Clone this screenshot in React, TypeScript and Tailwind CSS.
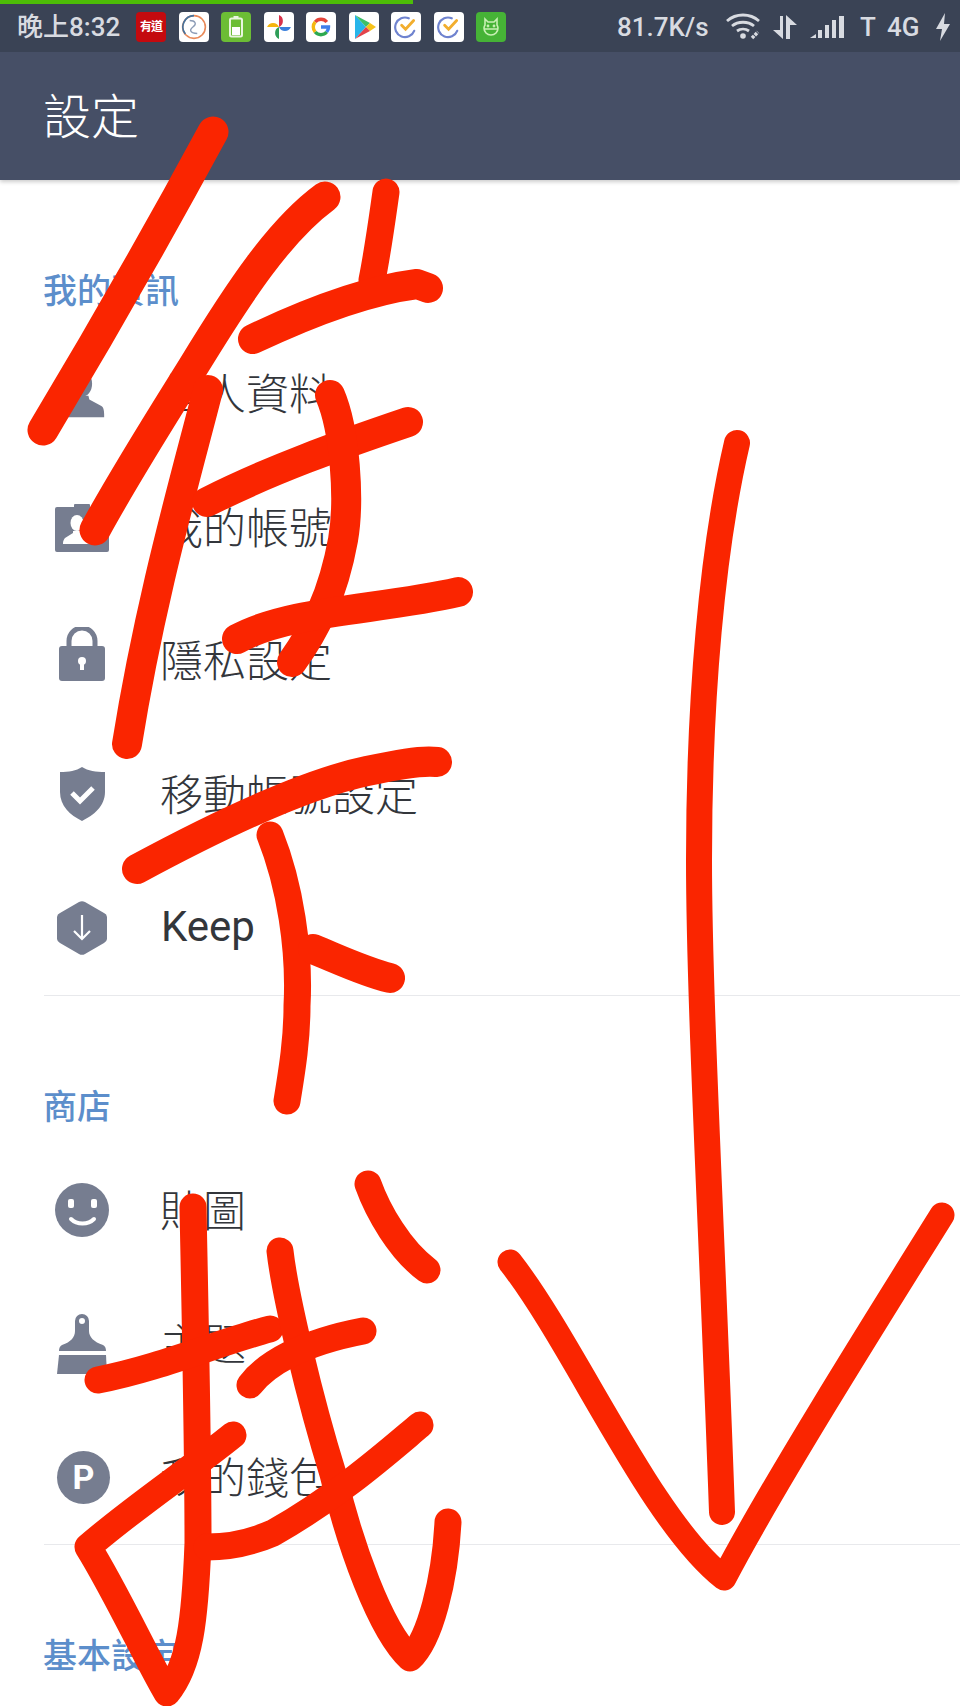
import type { ReactNode } from "react";

const gray = "#767d90";

function AppTile({ bg = "bg-white", children }: { bg?: string; children: ReactNode }) {
  return <div className={`flex h-[30px] w-[30px] items-center justify-center overflow-hidden rounded-[4px] ${bg}`}>{children}</div>;
}

function TickTick() {
  return (
    <svg width="24" height="24" viewBox="0 0 22 22" fill="none">
      <path d="M18.500 14.500A9 9 0 1 1 13.500 3" stroke="#6f83cf" strokeWidth="2" strokeLinecap="round" />
      <path d="M7 9.500l3.600 3.600L18 5" stroke="#f2ae2e" strokeWidth="2.600" strokeLinecap="round" />
    </svg>
  );
}

function StatusBar() {
  return (
    <div className="relative flex h-[52px] items-center bg-[#3a4355] pl-[17px] pt-[2px] font-['Roboto','Noto_Sans_CJK_TC',sans-serif] font-medium text-[#d8dbe1]">
      <div className="absolute left-0 top-0 h-1 w-[413px] bg-[#4dbd08]" />
      <span className="w-[119px] text-[26px] leading-none">晚上8:32</span>
      <div className="flex gap-[12.5px]">
        <AppTile bg="bg-[#c40a0e]">
          <span className="text-[12px] font-bold leading-none tracking-[-1px] text-white">有道</span>
        </AppTile>
        <AppTile>
          <svg width="26" height="26" viewBox="0 0 24 24" fill="none">
            <circle cx="12" cy="12" r="10.500" stroke="#e98a5a" strokeWidth="1.500" />
            <path d="M12 1.500a10.500 10.500 0 0 0-8 17" stroke="#44739f" strokeWidth="1.500" />
            <path d="M8 6c5 0 7 3 3 6s-2 6 4 6" stroke="#8c9cb6" strokeWidth="1.300" />
          </svg>
        </AppTile>
        <AppTile bg="bg-[#6cbd35]">
          <svg width="14" height="22" viewBox="0 0 14 22">
            <rect x="4.500" y="0" width="5" height="3" fill="#e9f5df" />
            <rect x="1" y="2.500" width="12" height="18" rx="1.500" fill="none" stroke="#e9f5df" strokeWidth="2" />
            <rect x="3" y="11" width="8" height="8" fill="#fff" />
          </svg>
        </AppTile>
        <AppTile>
          <svg width="26" height="26" viewBox="0 0 24 24">
            <path d="M1 12a6 6 0 0 1 11-0z" fill="#f5b60f" />
            <path d="M12 1a6 6 0 0 1 0 11z" fill="#d8314a" />
            <path d="M23 12a6 6 0 0 1-11 0z" fill="#3a7fdc" />
            <path d="M12 23a6 6 0 0 1 0-11z" fill="#2f9e58" />
          </svg>
        </AppTile>
        <AppTile>
          <svg width="20" height="20" viewBox="0 0 20 20" fill="none" strokeWidth="3.400">
            <path d="M15.800 5A7.500 7.500 0 0 0 4.200 5" stroke="#e5443a" />
            <path d="M4.200 5a7.500 7.500 0 0 0 0 10" stroke="#f4b70f" />
            <path d="M4.200 15a7.500 7.500 0 0 0 11.500 0" stroke="#2da94f" />
            <path d="M15.700 15a7.500 7.500 0 0 0 1.800-5H10" stroke="#3f7fea" />
          </svg>
        </AppTile>
        <AppTile>
          <svg width="24" height="26" viewBox="0 0 24 26">
            <path d="M3 1l11 12L3 25z" fill="#27b5ea" />
            <path d="M3 1l15 8-4 4z" fill="#3fbf68" />
            <path d="M18 9l6 4-6 4-4-4z" fill="#f6c21a" />
            <path d="M3 25l15-8-4-4z" fill="#e2434b" />
          </svg>
        </AppTile>
        <AppTile><TickTick /></AppTile>
        <AppTile><TickTick /></AppTile>
        <AppTile bg="bg-[#46b336]">
          <svg width="22" height="22" viewBox="0 0 22 22" fill="none" stroke="#c8f0b4" strokeWidth="1.600">
            <path d="M5 3l3 3h6l3-3v6a7 6.500 0 0 1 1 3c0 4-3 7-7 7s-7-3-7-7a7 6.500 0 0 1 1-3z" />
            <path d="M4 13h14" />
            <circle cx="8" cy="10" r=".6" />
            <circle cx="14" cy="10" r=".6" />
          </svg>
        </AppTile>
      </div>
      <span className="ml-[111px] w-[109px] text-[26px] leading-none">81.7K/s</span>
      <svg width="36" height="28" viewBox="0 0 36 28" fill="none" stroke="#d8dbe1" strokeWidth="2.800">
        <path d="M1 8c9-8 23-8 32 0" />
        <path d="M6 13c6-5 16-5 22 0" />
        <path d="M11 18c3.500-2.500 8.500-2.500 12 0" />
        <circle cx="17" cy="23" r="2.800" fill="#d8dbe1" stroke="none" />
        <path d="M26 25l6-6" strokeWidth="3.500" strokeDasharray="3 1" />
      </svg>
      <svg className="ml-[11px]" width="24" height="26" viewBox="0 0 24 26" fill="#d8dbe1">
        <path d="M7 2h3v23L0 16h7z" />
        <path d="M13 1l11 10h-7v14h-4z" />
      </svg>
      <svg className="ml-[13px]" width="35" height="24" viewBox="0 0 35 24" fill="#d8dbe1">
        <path d="M0 23l6-4v4z" />
        <rect x="8" y="15" width="4" height="8" />
        <rect x="15" y="10" width="4" height="13" />
        <rect x="22" y="5" width="4" height="18" />
        <rect x="29" y="1" width="5" height="22" />
      </svg>
      <span className="ml-[15px] w-[27px] text-[26px] leading-none">T</span>
      <span className="w-[48px] text-[26px] leading-none">4G</span>
      <svg width="16" height="28" viewBox="0 0 16 28" fill="#d8dbe1">
        <path d="M10 0L1 16h6l-2 12 10-17H9z" />
      </svg>
    </div>
  );
}

function PersonIcon() {
  return (
    <svg className="-ml-[2px]" width="50" height="54" viewBox="0 0 54 54" fill={gray}>
      <ellipse cx="28" cy="16" rx="11" ry="14" />
      <path d="M21 29h14l1 4 13 7c2 1 3 4 3 9v3H6v-3c0-5 1-8 3-9l13-7z" />
    </svg>
  );
}

function CardIcon() {
  return (
    <svg className="mt-[1px]" width="54" height="48" viewBox="0 0 54 48">
      <path d="M2 3h17V1a1 1 0 0 1 1-1h14a1 1 0 0 1 1 1v2h17a2 2 0 0 1 2 2v41a2 2 0 0 1-2 2H2a2 2 0 0 1-2-2V5a2 2 0 0 1 2-2z" fill={gray} />
      <ellipse cx="22" cy="19" rx="6.500" ry="8" fill="#fff" />
      <path d="M18 27h8l1 2 9 5c1 1 2 3 2 5v1H8v-1c0-2 1-4 2-5l8-5z" fill="#fff" />
    </svg>
  );
}

function LockIcon() {
  return (
    <svg className="-mt-[13px]" width="46" height="54" viewBox="0 0 46 54">
      <path d="M10 21v-7a13 13 0 0 1 26 0v7" fill="none" stroke={gray} strokeWidth="5" />
      <rect x="0" y="19" width="46" height="35" rx="3" fill={gray} />
      <circle cx="23" cy="34" r="4" fill="#fff" />
      <rect x="21" y="35" width="4" height="8" fill="#fff" />
    </svg>
  );
}

function ShieldIcon() {
  return (
    <svg width="46" height="54" viewBox="0 0 46 54">
      <path d="M23 0c6 4 14 5 23 5v20c0 14-11 23-23 29C11 48 1 39 1 25V5c9 0 16-1 22-5z" fill={gray} />
      <path d="M13 26l8 8 13-13" fill="none" stroke="#fff" strokeWidth="5" />
    </svg>
  );
}

function HexIcon() {
  return (
    <svg width="50" height="54" viewBox="0 0 50 54">
      <path d="M22 1a6 6 0 0 1 6 0l19 11a5 5 0 0 1 3 5v20a5 5 0 0 1-3 5L28 53a6 6 0 0 1-6 0L3 42a5 5 0 0 1-3-5V17a5 5 0 0 1 3-5z" fill={gray} />
      <path d="M25 14v24M17 30l8 8 8-8" fill="none" stroke="#fff" strokeWidth="2.200" />
    </svg>
  );
}

function SmileIcon() {
  return (
    <svg width="54" height="54" viewBox="0 0 54 54">
      <circle cx="27" cy="27" r="27" fill={gray} />
      <rect x="13" y="16" width="6" height="9" rx="2" fill="#fff" />
      <rect x="36" y="16" width="6" height="9" rx="2" fill="#fff" />
      <path d="M16 36c6 6 17 6 23 0" fill="none" stroke="#fff" strokeWidth="4" strokeLinecap="round" />
    </svg>
  );
}

function BrushIcon() {
  return (
    <svg width="50" height="60" viewBox="0 0 50 60" fill={gray}>
      <path fillRule="evenodd" d="M25 0a7 7 0 0 1 7 7v10c0 6 5 11 14 14 2 1 3 3 3 6H2c0-3 1-5 3-6 9-3 13-8 13-14V7a7 7 0 0 1 7-7zm0 4a3 3 0 1 0 0 6 3 3 0 0 0 0-6z" />
      <path d="M2 41h47l1 19H0z" />
    </svg>
  );
}

function PointIcon() {
  return (
    <div className="ml-[3px] flex h-[53px] w-[53px] shrink-0 items-center justify-center rounded-full bg-[#767d90] font-['Roboto',sans-serif] text-[34px] font-bold leading-none text-white">
      P
    </div>
  );
}

function Section({ title, children }: { title: string; children?: ReactNode }) {
  return (
    <div>
      <div className="flex h-[60px] items-center pb-[3px] pl-[43px] text-[34px] font-medium leading-none text-[#5c8ecb]">{title}</div>
      {children}
    </div>
  );
}

function Row({ icon, label, latin }: { icon: ReactNode; label: string; latin?: boolean }) {
  return (
    <div className="flex h-[133.5px] items-center pl-[55px]">
      <div className="flex w-[54px] shrink-0 items-center justify-center">{icon}</div>
      {latin ? (
        <span className="mb-[2px] ml-[52px] font-['Roboto',sans-serif] text-[42px] leading-none text-[#33363b]">{label}</span>
      ) : (
        <span className="mb-[4px] ml-[51px] text-[43px] font-light leading-none text-[#33363b]">{label}</span>
      )}
    </div>
  );
}

function Scribble() {
  return (
    <svg className="pointer-events-none absolute inset-0" width="960" height="1706" viewBox="0 0 960 1706" fill="none" stroke="#fa2500" strokeWidth="27" strokeLinecap="round" strokeLinejoin="round">
      <path strokeWidth="31" d="M213 132C160 230 100 335 43 430" />
      <path strokeWidth="31" d="M325 197C280 230 240 290 193 367C160 420 125 475 95 530" />
      <path d="M386 192C382 220 378 250 372 280" />
      <path strokeWidth="30" d="M253 339C310 312 370 290 417 284L428 288" />
      <path strokeWidth="30" d="M208 390C185 480 150 600 127 744" />
      <path strokeWidth="30" d="M408 422C340 445 270 470 207 502" />
      <path strokeWidth="30" d="M330 395C345 430 350 500 343 540C333 595 315 630 292 662" />
      <path strokeWidth="30" d="M237 639C290 610 380 610 458 592" />
      <path strokeWidth="30" d="M137 869C200 835 300 785 367 771C395 765 420 760 437 762" />
      <path d="M270 835C290 885 300 950 297 1006C297 1040 292 1070 287 1101" />
      <path strokeWidth="30" d="M313 949C340 960 365 972 390 978" />
      <path d="M193 1207C195 1310 198 1440 198 1543C195 1620 190 1665 167 1693C150 1665 115 1590 88 1547C130 1510 190 1470 233 1435" />
      <path d="M98 1380C160 1368 220 1342 270 1329" />
      <path d="M280 1251C285 1295 310 1400 333 1474C350 1545 380 1630 410 1658C430 1640 445 1580 448 1522" />
      <path d="M250 1385C265 1365 300 1343 363 1331" />
      <path d="M420 1425C390 1450 340 1495 273 1533C250 1543 225 1547 207 1547" />
      <path d="M368 1184C378 1212 400 1250 427 1270" />
      <path strokeWidth="26" d="M737 443C712 550 699 700 699 860C699 1000 712 1230 722 1512" />
      <path strokeWidth="25" d="M510 1262C575 1345 650 1520 724 1578C770 1490 870 1330 942 1215" />
    </svg>
  );
}

export default function App() {
  return (
    <div className="relative h-[1706px] w-[960px] overflow-hidden bg-white font-['Noto_Sans_CJK_TC','Noto_Sans',sans-serif]">
      <StatusBar />
      <div className="flex h-[128px] items-center bg-[#464f66] pb-[6px] pl-[43px] text-[48px] font-light leading-none text-white shadow-[0_2px_4px_rgba(0,0,0,0.2)]">
        設定
      </div>
      <div className="pt-[80px]">
        <Section title="我的資訊">
          <div className="mt-[7px]">
            <Row icon={<PersonIcon />} label="個人資料" />
            <Row icon={<CardIcon />} label="我的帳號" />
            <Row icon={<LockIcon />} label="隱私設定" />
            <Row icon={<ShieldIcon />} label="移動帳號設定" />
            <Row icon={<HexIcon />} label="Keep" latin />
          </div>
        </Section>
        <div className="ml-[44px] border-t border-[#e8e9ec]" />
        <div className="pt-[81px]">
          <Section title="商店">
            <div className="mt-[7px]">
              <Row icon={<SmileIcon />} label="貼圖" />
              <Row icon={<BrushIcon />} label="主題" />
              <Row icon={<PointIcon />} label="我的錢包" />
            </div>
          </Section>
        </div>
        <div className="ml-[44px] border-t border-[#e8e9ec]" />
        <div className="pt-[80px]">
          <Section title="基本設定" />
        </div>
      </div>
      <Scribble />
    </div>
  );
}
